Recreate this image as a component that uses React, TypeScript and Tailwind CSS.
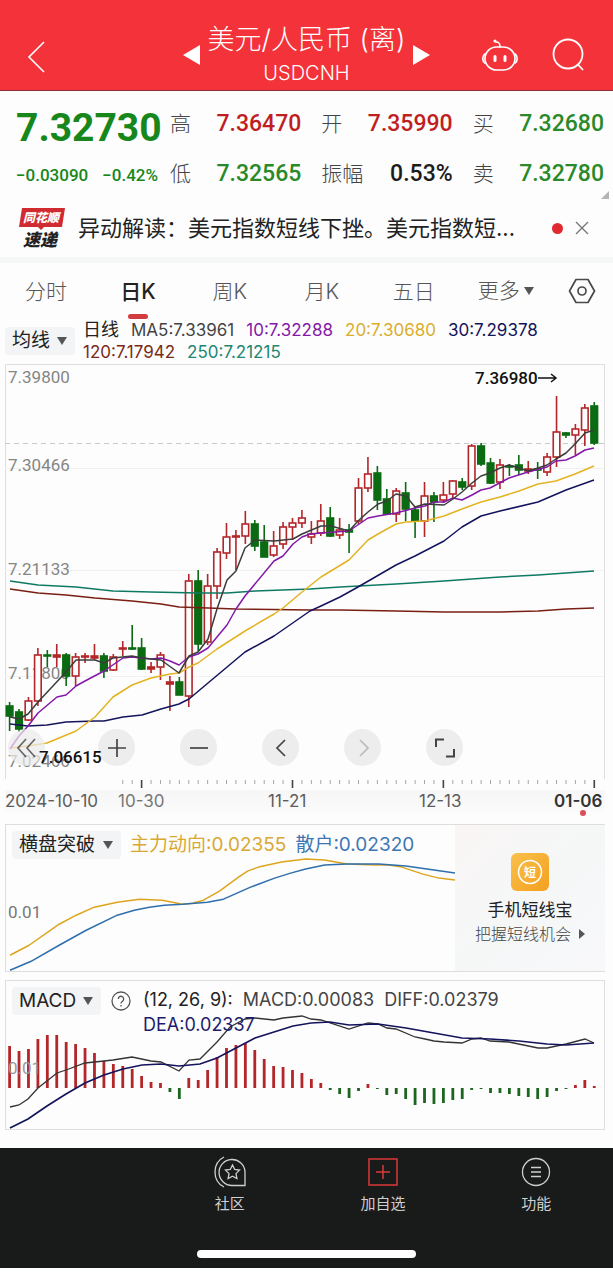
import type { ReactNode } from "react";

const CJK = "font-['Inter','Noto_Sans_CJK_SC',sans-serif]";
const DIN = "font-['Roboto','Noto_Sans_CJK_SC',sans-serif]";

// Chart geometry: first candle centre and distance between candles
const X0 = 9.6;
const STEP = 9.43;

// [high, body top, body bottom, low, direction]
type Candle = [number, number, number, number, "r" | "g"];

const CANDLES: Candle[] = [
  [703, 707, 717, 732, "g"], [710, 713, 730, 733, "g"], [698, 702, 721, 722, "r"], [649, 656, 702, 707, "r"],
  [651, 656, 657, 668, "g"], [645, 656, 658, 668, "r"], [654, 656, 677, 687, "g"], [654, 658, 677, 687, "r"],
  [654, 657, 658, 664, "r"], [645, 657, 659, 661, "r"], [654, 657, 672, 679, "g"], [655, 658, 671, 672, "r"],
  [642, 649, 650, 657, "r"], [626, 649, 650, 651, "g"], [639, 649, 670, 671, "g"], [663, 668, 670, 674, "r"],
  [653, 656, 668, 681, "r"], [677, 683, 685, 712, "r"], [678, 683, 696, 696, "g"], [575, 582, 697, 708, "r"],
  [571, 582, 645, 652, "g"], [575, 587, 643, 646, "r"], [549, 553, 587, 600, "r"], [524, 538, 554, 560, "r"],
  [531, 537, 538, 571, "r"], [512, 525, 537, 545, "r"], [521, 525, 547, 552, "g"], [526, 543, 558, 558, "g"],
  [532, 547, 556, 558, "r"], [523, 528, 545, 550, "r"], [519, 524, 528, 541, "r"], [511, 519, 524, 529, "r"],
  [522, 535, 538, 545, "r"], [505, 522, 534, 537, "r"], [508, 519, 537, 538, "g"], [519, 531, 536, 540, "r"],
  [525, 531, 533, 554, "g"], [479, 489, 522, 525, "r"], [458, 475, 489, 493, "r"], [467, 474, 501, 511, "g"],
  [490, 500, 515, 515, "g"], [489, 492, 515, 523, "r"], [483, 494, 510, 522, "g"], [507, 511, 522, 539, "g"],
  [483, 497, 522, 538, "r"], [493, 497, 503, 523, "g"], [483, 496, 501, 504, "r"], [481, 482, 495, 499, "r"],
  [479, 483, 488, 491, "g"], [445, 447, 487, 491, "r"], [444, 447, 465, 467, "g"], [459, 464, 484, 485, "g"],
  [460, 466, 483, 490, "r"], [465, 467, 468, 477, "g"], [456, 466, 471, 476, "g"], [462, 470, 472, 475, "r"],
  [463, 470, 471, 480, "g"], [454, 458, 473, 477, "r"], [397, 433, 458, 468, "r"], [433, 434, 436, 439, "g"],
  [425, 430, 436, 456, "r"], [405, 409, 431, 447, "r"], [403, 407, 444, 446, "g"],
];

const MA_LINES = [
  { color: "#0f7a63", points: "10,582 38,586 76,588 113,592 151,593 198,594 227,594 255,592 310,590 340,588 396,585 444,582 500,578 538,576 594,572" },
  { color: "#7a1f14", points: "10,590 38,594 66,596 95,599 132,602 161,605 179,608 208,609 236,610 310,611 340,611 396,612 444,613 500,613 538,612 566,610 594,609" },
  { color: "#14145c", points: "10,725 28,727 47,726 66,723 95,722 104,722 123,718 142,716 161,710 179,705 189,700 208,684 245,653 274,637 310,612 321,607 340,598 358,588 396,566 415,557 444,542 462,528 481,517 500,512 538,503 566,491 594,481" },
  { color: "#e3b322", points: "10,749 28,747 47,744 76,732 95,718 113,698 132,686 151,679 170,675 179,674 189,668 198,664 217,650 245,632 274,615 283,609 302,593 321,578 349,561 368,541 378,535 396,525 406,523 425,522 444,517 462,510 481,503 500,498 519,492 538,485 556,482 575,475 594,467" },
  { color: "#8418a8", points: "10,750 19,737 28,727 38,714 57,698 66,696 76,687 85,682 104,672 123,659 132,658 151,660 161,659 170,662 179,666 189,658 198,655 208,649 217,638 227,626 236,610 245,597 274,562 283,557 293,545 302,538 310,535 321,534 349,532 368,519 378,517 396,514 415,509 425,507 434,503 444,503 453,499 462,501 472,496 481,491 490,489 509,479 528,473 547,468 556,462 566,461 575,457 585,451 594,449" },
  { color: "#3c3c3c", points: "10,718 19,720 28,715 38,703 66,673 76,661 95,661 104,664 113,659 132,657 142,659 161,661 179,674 189,657 198,653 208,640 217,610 227,581 236,572 245,549 255,541 274,542 293,540 302,535 321,527 331,527 349,532 358,522 368,513 378,505 387,502 396,495 406,497 415,508 425,505 444,506 453,500 462,493 472,484 481,477 490,474 500,469 509,466 519,469 528,472 538,469 547,466 556,460 566,454 575,445 585,434 594,431" },
];

const AXIS = [
  { y: 384, text: "7.39800" },
  { y: 472, text: "7.30466" },
  { y: 576, text: "7.21133" },
  { y: 680, text: "7.11800" },
  { y: 768, text: "7.02466" },
];

const TREND_LINES = [
  { color: "#dca51d", points: "10,957 29,947 59,926 76,917 94,909 117,904 139,901 162,902 172,904 182,906 192,905 203,902 219,893 238,879 247,873 258,869 281,864 305,861 324,862 346,866 375,867 388,867 401,869 422,876 438,880 454,882" },
  { color: "#2f6fad", points: "10,972 31,963 59,947 86,932 117,917 134,912 149,909 164,907 182,906 207,904 223,901 250,889 274,880 290,875 305,871 324,867 346,866 378,866 405,868 426,871 454,875" },
];

// Bar heights, positive above the zero line
const MACD_BARS = [
  42, 37, 39, 49, 53, 53, 46, 44, 40, 35, 27, 24, 22, 19, 12, 6, 5, -4, -11, 10, 8, 18, 31, 40, 43, 45, 38, 29, 22, 21,
  18, 15, 9, 5, -2, -6, -10, -3, 4, -1, -7, -6, -11, -17, -15, -16, -15, -12, -11, -2, -1, -5, -5, -6, -8, -9, -11, -9,
  -3, -1, 3, 8, 2,
];

const DIFF = "10,1110 19,1108 28,1102 38,1091 57,1076 66,1073 85,1066 104,1064 113,1063 132,1060 151,1064 161,1065 179,1074 189,1063 200,1062 217,1045 230,1030 245,1022 255,1021 274,1023 283,1021 302,1019 311,1022 321,1023 349,1032 368,1026 378,1027 387,1031 396,1032 415,1040 425,1042 434,1044 444,1045 462,1046 472,1042 481,1041 490,1044 509,1045 538,1051 547,1051 566,1047 585,1042 594,1046";
const DEA = "10,1131 28,1122 47,1109 66,1097 85,1086 104,1078 123,1072 142,1068 161,1067 179,1069 200,1067 217,1061 236,1051 255,1041 274,1035 293,1029 311,1026 330,1025 349,1028 378,1027 406,1031 434,1036 462,1041 490,1042 519,1044 547,1047 566,1048 594,1046";

function Header() {
  return (
    <header className="grid grid-cols-[1fr_auto_1fr] items-center border-b border-[#8f2d3c] bg-[#f3323a] pt-5 text-white">
      <button aria-label="返回" className="ml-6 mt-1 w-6">
        <svg viewBox="0 0 24 36" className="h-9 w-6 fill-none stroke-white stroke-[1.6]">
          <path d="M20 3 5 18 20 33" />
        </svg>
      </button>
      <div className="flex items-center gap-2">
        <button aria-label="上一个">
          <svg viewBox="0 0 17 20" className="h-5 w-[17px] fill-white"><path d="M17 0v20L0 10z" /></svg>
        </button>
        <div className="text-center">
          <h1 className="text-[27px] font-light leading-10">美元/人民币 (离)</h1>
          <p className="pb-1 text-[20px] font-light leading-[26px]">USDCNH</p>
        </div>
        <button aria-label="下一个">
          <svg viewBox="0 0 17 20" className="h-5 w-[17px] fill-white"><path d="M0 0v20l17-10z" /></svg>
        </button>
      </div>
      <div className="mr-7 flex items-center justify-end gap-8">
        <button aria-label="智能助手">
          <svg viewBox="0 0 38 36" className="h-9 w-[38px] fill-none stroke-white stroke-[1.7]">
            <rect x="4" y="10" width="30" height="23" rx="11.5" />
            <path d="M4 17c-3 2-3 7 0 9M34 17c3 2 3 7 0 9M19 10c0-4-1-5-4-5" strokeLinecap="round" />
            <circle cx="14" cy="4" r="1.6" className="fill-white stroke-none" />
            <path d="M14 19.5v4M24 19.5v4" strokeWidth="3" strokeLinecap="round" />
          </svg>
        </button>
        <button aria-label="搜索">
          <svg viewBox="0 0 34 34" className="h-[34px] w-[34px] fill-none stroke-white stroke-[1.8]">
            <circle cx="17" cy="16" r="14.5" />
            <path d="m26.5 26 5.5 6" />
          </svg>
        </button>
      </div>
    </header>
  );
}

function Stat({ label, value, tone }: { label: string; value: string; tone: string }) {
  return (
    <div className="flex items-center justify-between">
      <dt className="text-[21px] font-light text-[#444]">{label}</dt>
      <dd className={`${DIN} text-[23px] font-medium ${tone}`}>{value}</dd>
    </div>
  );
}

function Quote() {
  return (
    <section className="relative flex gap-3 pb-3 pl-4 pr-[9px] pt-4 leading-8">
      <div className={`${DIN} w-[142px] text-[#17871b]`}>
        <p className="text-[39px] font-bold leading-[42px]">7.32730</p>
        <p className="mt-[10px] flex justify-between text-[17px] font-medium">
          <span>−0.03090</span>
          <span>−0.42%</span>
        </p>
      </div>
      <dl className="grid flex-1 grid-cols-3 gap-x-5 gap-y-4">
        <Stat label="高" value="7.36470" tone="text-[#c01f1f]" />
        <Stat label="开" value="7.35990" tone="text-[#c01f1f]" />
        <Stat label="买" value="7.32680" tone="text-[#2a8a2a]" />
        <Stat label="低" value="7.32565" tone="text-[#2a8a2a]" />
        <Stat label="振幅" value="0.53%" tone="text-[#1c1c1c]" />
        <Stat label="卖" value="7.32780" tone="text-[#2a8a2a]" />
      </dl>
      <svg viewBox="0 0 8 8" className="absolute bottom-1 right-1 size-2 fill-[#b5b5b5]"><path d="M8 0v8H0z" /></svg>
    </section>
  );
}

function News() {
  return (
    <section className="flex items-center border-b-[6px] border-[#f5f6f6] pb-2 pl-[19px] pr-6 pt-1">
      <svg viewBox="0 0 47 42" className="h-[42px] w-[47px] shrink-0">
        <path d="M3 1h43l-3 19H25l-3 3-3-3H0z" fill="#cf2b30" />
        <text x="4" y="15" fontSize="12" fontStyle="italic" fontWeight="900" fill="#fff">同花顺</text>
        <text x="4" y="39" fontSize="17" fontStyle="italic" fontWeight="900" fill="#222">速递</text>
      </svg>
      <a href="#news" className="ml-3 flex-1 truncate text-[22px] leading-10 text-[#222]">
        异动解读：美元指数短线下挫。美元指数短...
      </a>
      <span className="size-[11px] rounded-full bg-[#e02a2f]" />
      <button aria-label="关闭" className="ml-3">
        <svg viewBox="0 0 14 14" className="size-[14px] stroke-[#777] stroke-[1.4]"><path d="m1 1 12 12M13 1 1 13" /></svg>
      </button>
    </section>
  );
}

function Tabs() {
  const tabs = ["分时", "日K", "周K", "月K", "五日"];
  return (
    <nav className="grid grid-cols-[repeat(6,3fr)_2fr] items-center text-[21px] leading-[30px]">
      {tabs.map((tab) => (
        <button
          key={tab}
          className={`flex flex-col items-center pt-[14px] ${tab === "日K" ? "font-medium text-[#222]" : "font-light text-[#555]"}`}
        >
          {tab}
          <span className={`mt-[7px] h-[5px] w-5 rounded-sm ${tab === "日K" ? "bg-[#d23c3e]" : ""}`} />
        </button>
      ))}
      <button className="flex items-center justify-center gap-1 font-light text-[#555]">
        更多
        <svg viewBox="0 0 10 8" className="h-2 w-[10px] fill-[#555]"><path d="M0 0h10L5 8z" /></svg>
      </button>
      <button aria-label="设置" className="flex justify-center">
        <svg viewBox="0 0 28 26" className="h-[26px] w-7 fill-none stroke-[#4a4a4a] stroke-[1.7]">
          <path d="M8 1.5h12L26.500 13 20 24.500H8L1.500 13z" strokeLinejoin="round" />
          <circle cx="14" cy="13" r="4" />
        </svg>
      </button>
    </nav>
  );
}

function Picker({ name, value, width }: { name: string; value: string; width: string }) {
  return (
    <label className={`relative block shrink-0 rounded-sm bg-[#f3f4f5] ${width}`}>
      <span className="sr-only">{name}</span>
      <select className="block h-7 w-full appearance-none bg-transparent pl-[7px] text-[19px] leading-7 text-[#222]">
        <option>{value}</option>
      </select>
      <svg viewBox="0 0 10 8" className="pointer-events-none absolute right-2 top-[10px] h-2 w-[10px] fill-[#555]">
        <path d="M0 0h10L5 8z" />
      </svg>
    </label>
  );
}

function Legend() {
  return (
    <div className="flex items-center gap-2 pb-px pl-[5px] pr-2">
      <Picker name="主图指标" value="均线" width="w-[70px]" />
      <p className="flex flex-1 flex-wrap gap-x-3 text-[17px] leading-[22px]">
        <span className="text-[18px] text-[#222]">日线</span>
        <span className="text-[#444]">MA5:7.33961</span>
        <span className="text-[#8418a8]">10:7.32288</span>
        <span className="text-[#d9ae2c]">20:7.30680</span>
        <span className="text-[#14145c]">30:7.29378</span>
        <span className="text-[#7a2a18]">120:7.17942</span>
        <span className="text-[#218672]">250:7.21215</span>
      </p>
    </div>
  );
}

function RoundButton({ label, children, className = "" }: { label: string; children: ReactNode; className?: string }) {
  return (
    <button aria-label={label} className={`flex size-[37px] items-center justify-center rounded-full bg-[#ebebeb]/90 ${className}`}>
      <svg viewBox="0 0 24 24" className="size-6 fill-none stroke-current stroke-[1.7]">{children}</svg>
    </button>
  );
}

function PriceChart() {
  return (
    <section className="relative">
      <svg viewBox="5 365 600 426" className={`${DIN} block w-full`}>
        <path d="M5.500 780V365.500H604.500V780" fill="none" stroke="#dedede" />
        <path d="M5 469.500H604M5 571.500H604M5 677.500H604" stroke="#f1f1f1" />
        <path d="M5 444.500H604" stroke="#c9c9c9" strokeDasharray="5 4" />
        <g fontSize="17" fill="#858585">
          {AXIS.map((a) => (
            <text key={a.text} x="8" y={a.y}>{a.text}</text>
          ))}
        </g>
        {CANDLES.map(([high, top, bottom, low, dir], i) => {
          const x = X0 + i * STEP;
          const color = dir === "r" ? "#b3262a" : "#0b6b12";
          const hollow = dir === "r" && bottom - top > 2;
          return (
            <g key={i} stroke={color} strokeWidth="1.6">
              <path d={`M${x} ${high}V${top}M${x} ${bottom}V${low}`} />
              <rect x={x - 3.3} y={top} width="6.600" height={bottom - top} fill={hollow ? "#fdfdfd" : color} />
            </g>
          );
        })}
        <g fill="none" strokeWidth="1.500" strokeLinejoin="round">
          {MA_LINES.map((l) => (
            <polyline key={l.color} points={l.points} stroke={l.color} />
          ))}
        </g>
        <text x="475" y="385" fontSize="17" fontWeight="500" fill="#111">7.36980</text>
        <path d="M538 379H556M551 375l5 4-5 4" fill="none" stroke="#111" strokeWidth="1.500" />
        {CANDLES.map((_, i) =>
          i < 12 ? null : (
            <path
              key={i}
              d={`M${X0 + i * STEP} 781v${(i - 14) % 16 === 0 ? 8 : 4}`}
              stroke={(i - 14) % 16 === 0 ? "#444" : "#a5a5a5"}
              strokeWidth={(i - 14) % 16 === 0 ? 1.6 : 1}
            />
          )
        )}
      </svg>
      <div className="absolute bottom-6 left-[3px] flex gap-[45px] text-[#444]">
        <RoundButton label="最早" className="mr-2 opacity-80">
          <path d="M11 3 3 12l8 9M20 3l-8 9 8 9" />
        </RoundButton>
        <RoundButton label="放大"><path d="M12 3v18M3 12h18" /></RoundButton>
        <RoundButton label="缩小"><path d="M3 12h18" /></RoundButton>
        <RoundButton label="向左"><path d="m16 4-8 8 8 8" /></RoundButton>
        <RoundButton label="向右" className="text-[#bbb]"><path d="m9 4 8 8-8 8" /></RoundButton>
        <RoundButton label="全屏"><path d="M3 11V3.500h8M21 13v7.500h-8" strokeWidth="2" /></RoundButton>
      </div>
      <p className={`${DIN} absolute bottom-5 left-[34px] text-[17px] font-medium leading-[26px] text-[#111]`}>7.06615</p>
    </section>
  );
}

function Dates() {
  return (
    <div className="grid grid-cols-[113fr_150fr_151fr_135fr_51fr] bg-gradient-to-b from-[#f6f6f7] to-[#fbfbfb] text-[17px] leading-[22px] text-[#5c5c5c]">
      <span>2024-10-10</span>
      <span className="text-[#777]">10-30</span>
      <span>11-21</span>
      <span>12-13</span>
      <span className="relative font-semibold text-[#333]">
        01-06
        <span className="absolute left-1/2 top-5 size-[6px] rounded-full bg-[#d9505a]" />
      </span>
    </div>
  );
}

function TrendPanel() {
  return (
    <section className="flex border border-r-0 border-[#dedede]">
      <div className="relative flex-1">
        <svg viewBox="6 827 448 146" className={`${DIN} block w-full`}>
          <text x="8" y="920" fontSize="17" fill="#777">0.01</text>
          <g fill="none" strokeWidth="1.500" strokeLinejoin="round">
            {TREND_LINES.map((l) => (
              <polyline key={l.color} points={l.points} stroke={l.color} />
            ))}
          </g>
        </svg>
        <div className="absolute left-[6px] top-[6px] flex items-center gap-[9px] whitespace-nowrap text-[19px] leading-7">
          <Picker name="副图指标一" value="横盘突破" width="w-[109px]" />
          <span className="text-[#d9a832]">主力动向:0.02355</span>
          <span className="text-[#3d76b3]">散户:0.02320</span>
        </div>
      </div>
      <a
        href="#short"
        className="flex w-[150px] flex-col items-center bg-gradient-to-br from-[#faf5f5] via-[#f5f7f7] to-[#f8f8fa] pt-7 text-[#222]"
      >
        <svg viewBox="0 0 38 38" className="size-[38px]">
          <defs>
            <linearGradient id="gold" x1="0" y1="0" x2="1" y2="1">
              <stop offset="0" stopColor="#f8c04a" />
              <stop offset="1" stopColor="#f5a020" />
            </linearGradient>
          </defs>
          <rect width="38" height="38" rx="6" fill="url(#gold)" />
          <circle cx="19" cy="19" r="11.500" fill="none" stroke="#fff" strokeWidth="1.500" />
          <text x="19" y="23.500" textAnchor="middle" fontSize="12" fontWeight="700" fill="#fff">短</text>
        </svg>
        <span className="mt-[6px] text-[17px] leading-[26px]">手机短线宝</span>
        <span className="flex items-center gap-2 text-[16px] font-light leading-[22px] text-[#444]">
          把握短线机会
          <svg viewBox="0 0 6 10" className="h-[10px] w-[6px] fill-[#555]"><path d="M0 0v10l6-5z" /></svg>
        </span>
      </a>
    </section>
  );
}

function MacdPanel() {
  return (
    <section className="relative border border-[#dedede]">
      <svg viewBox="6 984 598 148" className={`${DIN} block w-full`}>
        {MACD_BARS.map((v, i) => (
          <rect
            key={i}
            x={X0 + i * STEP - 1.4}
            y={v > 0 ? 1091 - v : 1091}
            width="2.800"
            height={Math.abs(v)}
            fill={v > 0 ? "#b3262a" : "#1d661f"}
          />
        ))}
        <text x="8" y="1077" fontSize="17" fill="#999">0.01</text>
        <polyline points={DIFF} fill="none" stroke="#333" strokeWidth="1.300" />
        <polyline points={DEA} fill="none" stroke="#14145c" strokeWidth="1.700" />
      </svg>
      <div className="absolute left-[6px] top-[6px] flex items-start text-[18px] leading-7 text-[#444]">
        <Picker name="副图指标二" value="MACD" width="w-[89px]" />
        <button aria-label="说明" className="ml-[10px] mt-1">
          <svg viewBox="0 0 20 20" className="size-5 fill-none stroke-[#555] stroke-[1.300]">
            <circle cx="10" cy="10" r="9" />
            <path d="M7.300 8a2.700 2.700 0 1 1 4.200 2.200c-1 .7-1.500 1.100-1.500 2.300M10 14v1.500" />
          </svg>
        </button>
        <div className="ml-3">
          <p className="flex gap-[10px] leading-[26px]">
            <span className="text-[#222]">(12, 26, 9):</span>
            <span>MACD:0.00083</span>
            <span>DIFF:0.02379</span>
          </p>
          <p className="leading-6 text-[#1c1c6b]">DEA:0.02337</p>
        </div>
      </div>
    </section>
  );
}

function Footer() {
  return (
    <footer className="mt-[18px] bg-[#191a1a] pb-[10px] pt-2 text-[#cfcfcf]">
      <nav className="grid grid-cols-4 text-[15px] leading-6">
        <button className="col-start-2 flex flex-col items-center gap-1">
          <svg viewBox="0 0 32 32" className="size-8 fill-none stroke-[#cfcfcf] stroke-[1.300]">
            <path d="M31 29.500V15.500A13 13 0 1 0 18 29.500z" />
            <path d="M10 1C-2 7-2 25 10 31" />
            <path d="m18.500 9 2.200 4.500 4.800.6-3.500 3.500.9 4.900-4.400-2.300-4.400 2.300.9-4.900-3.500-3.500 4.800-.6z" />
          </svg>
          社区
        </button>
        <button className="flex flex-col items-center gap-1">
          <svg viewBox="0 0 32 32" className="size-8 fill-none stroke-[#dc3a3a] stroke-[1.500]">
            <path d="M2 3h28v26H2zM16 9v14M9 16h14" />
          </svg>
          加自选
        </button>
        <button className="flex flex-col items-center gap-1">
          <svg viewBox="0 0 32 32" className="size-8 fill-none stroke-[#cfcfcf] stroke-[1.300]">
            <circle cx="16" cy="16" r="13.500" />
            <path d="M11 11.500h10M11 16h10M11 20.500h10" />
          </svg>
          功能
        </button>
      </nav>
      <div className="mx-auto mt-[34px] h-2 w-[219px] rounded-full bg-white" />
    </footer>
  );
}

export default function App() {
  return (
    <div className={`${CJK} bg-[#fdfdfd]`}>
      <Header />
      <Quote />
      <News />
      <Tabs />
      <Legend />
      <main className="flex flex-col pl-[5px] pr-2">
        <PriceChart />
        <Dates />
        <div className="mt-3 flex flex-col gap-2">
          <TrendPanel />
          <MacdPanel />
        </div>
      </main>
      <Footer />
    </div>
  );
}
